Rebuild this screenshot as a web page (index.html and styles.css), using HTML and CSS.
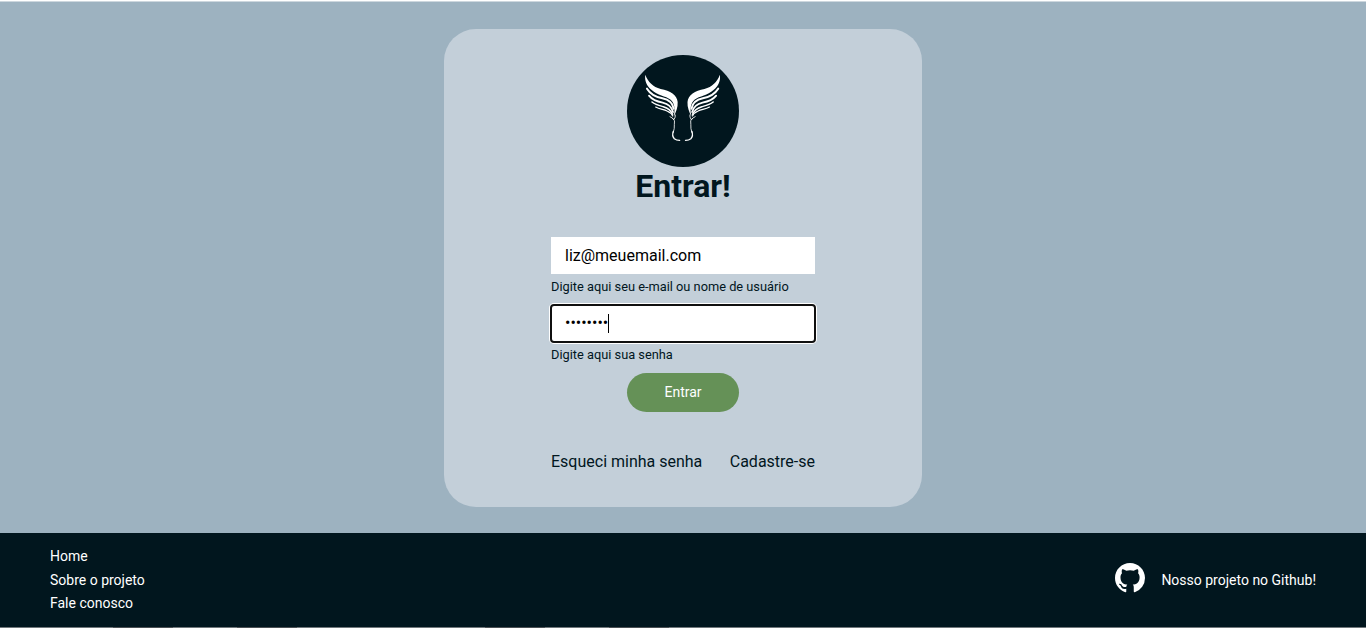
FILE: index.html
```html
<!DOCTYPE html>
<html lang="pt-BR">
<head>
<meta charset="utf-8">
<title>Entrar</title>
<link rel="stylesheet" href="styles.css">
</head>
<body>
<main class="page">
  <section class="card">
    <svg class="logo" viewBox="21 21 336 336" aria-hidden="true">
      <circle cx="189" cy="189" r="168" fill="#01161e"/>
      <defs>
        <g id="wing">
          <path fill="#fff" d="M76 80C84 102 99 116 122 123C151 129 171 140 173 162C174 178 168 192 161 206C166 184 164 165 152 155C137 144 112 142 95 126C80 113 73 98 76 80Z"/>
          <g fill="none" stroke="#fff" stroke-linecap="round">
            <path stroke-width="6" d="M81 122C92 140 108 147 127 151C146 155 158 163 161 182"/>
            <path stroke-width="5.5" d="M87 143C98 157 112 161 128 164C145 168 155 176 159 192"/>
            <path stroke-width="4.5" d="M96 162C107 171 118 173 130 176C144 180 153 187 158 199"/>
            <path stroke-width="3.5" d="M107 177C119 184 131 184 141 189C150 193 155 197 158 204"/>
            <path stroke-width="2.5" d="M150 206Q158 210 162 215Q167 207 166 201M158 211Q167 217 163 229Q164 242 160 253"/>
            <path stroke-width="4" d="M160 250Q155 264 163 272Q169 277 179 277"/>
          </g>
        </g>
      </defs>
      <use href="#wing"/>
      <use href="#wing" transform="translate(375.5) scale(-1 1)"/>
    </svg>
    <h1 class="title">Entrar!</h1>
    <form class="form">
      <div class="field">liz@meuemail.com</div>
      <label class="hint">Digite aqui seu e-mail ou nome de usuário</label>
      <div class="field focused"><span class="dots">••••••••</span><span class="caret"></span></div>
      <label class="hint">Digite aqui sua senha</label>
      <button class="submit" type="button">Entrar</button>
    </form>
    <nav class="links"><a>Esqueci minha senha</a><a>Cadastre-se</a></nav>
  </section>
</main>
<footer class="footer">
  <nav class="menu"><a>Home</a><a>Sobre o projeto</a><a>Fale conosco</a></nav>
  <a class="github">
    <svg class="mark" viewBox="0 0 16 16" aria-hidden="true"><path fill="#fff" d="M8 0C3.58 0 0 3.58 0 8c0 3.54 2.29 6.53 5.47 7.59.4.07.55-.17.55-.38 0-.19-.01-.82-.01-1.49-2.01.37-2.53-.49-2.69-.94-.09-.23-.48-.94-.82-1.13-.28-.15-.68-.52-.01-.53.63-.01 1.08.58 1.23.82.72 1.21 1.87.87 2.33.66.07-.52.28-.87.51-1.07-1.78-.2-3.64-.89-3.64-3.95 0-.87.31-1.59.82-2.15-.08-.2-.36-1.02.08-2.12 0 0 .67-.21 2.2.82.64-.18 1.32-.27 2-.27s1.36.09 2 .27c1.53-1.04 2.2-.82 2.2-.82.44 1.1.16 1.92.08 2.12.51.56.82 1.27.82 2.15 0 3.07-1.87 3.75-3.65 3.95.29.25.54.73.54 1.48v2.2c0 .21.15.46.55.38A8.01 8.01 0 0 0 16 8c0-4.42-3.58-8-8-8z"/></svg>
    <span class="github-label">Nosso projeto no Github!</span>
  </a>
</footer>
<div class="edge"></div>
</body>
</html>
```
FILE: styles.css
```css
* { box-sizing: border-box; }
body {
  margin: 0;
  height: 628px;
  overflow: hidden;
  display: flex;
  flex-direction: column;
  font-family: Roboto, "Liberation Sans", sans-serif;
  color: #01161e;
}
.page {
  height: 533px;
  border-top: 1px solid #fff;
  padding-top: 28px;
  background: linear-gradient(#cdd7de 1px, #9db2c0 1px);
  display: flex;
  justify-content: center;
  align-items: flex-start;
}
.card {
  width: 478px;
  height: 478px;
  padding-top: 26px;
  border-radius: 32px;
  background: #c3cfd9;
  display: flex;
  flex-direction: column;
  align-items: center;
}
.logo { width: 112px; height: 112px; flex: none; }
.title { margin: 0; font-size: 32px; line-height: 38px; font-weight: 700; }
.form { width: 264px; margin-top: 32px; display: flex; flex-direction: column; }
.field {
  height: 37px;
  padding: 0 14px;
  background: #fff;
  color: #000;
  font-size: 16px;
  display: flex;
  align-items: center;
}
.hint { font-size: 12.8px; line-height: 15px; margin: 5px 0 11px; }
.focused {
  outline: 2px solid #101010;
  outline-offset: -1px;
  border-radius: 3px;
  box-shadow: 0 0 0 2px #fff;
}
.dots { line-height: 19px; padding-bottom: 2px; }
.caret { width: 1px; height: 19px; background: #000; }
.submit {
  align-self: center;
  width: 112px;
  height: 39px;
  padding: 0 0 2px;
  border: 0;
  border-radius: 20px;
  background: #659157;
  color: #fff;
  font: 400 14px Roboto, "Liberation Sans", sans-serif;
}
.links {
  width: 264px;
  margin-top: 40px;
  display: flex;
  justify-content: space-between;
  font-size: 16px;
  line-height: 19px;
}
.footer {
  height: 94px;
  padding: 0 50px;
  background: #01161e;
  color: #fff;
  display: flex;
  justify-content: space-between;
  font-size: 14px;
}
.menu { padding-top: 12px; display: flex; flex-direction: column; line-height: 23.5px; }
.github { height: 90px; display: flex; align-items: center; gap: 16px; }
.github-label { padding-top: 4px; }
.mark { width: 30px; height: 30px; }
.edge {
  height: 1px;
  background: linear-gradient(90deg,
    #70777b 113px, #4b5054 113px 173px, #70777b 173px 237px, #4b5054 237px 297px,
    #70777b 297px 485px, #4b5054 485px 545px, #70777b 545px 609px, #4b5054 609px 669px,
    #70777b 669px);
}
```
